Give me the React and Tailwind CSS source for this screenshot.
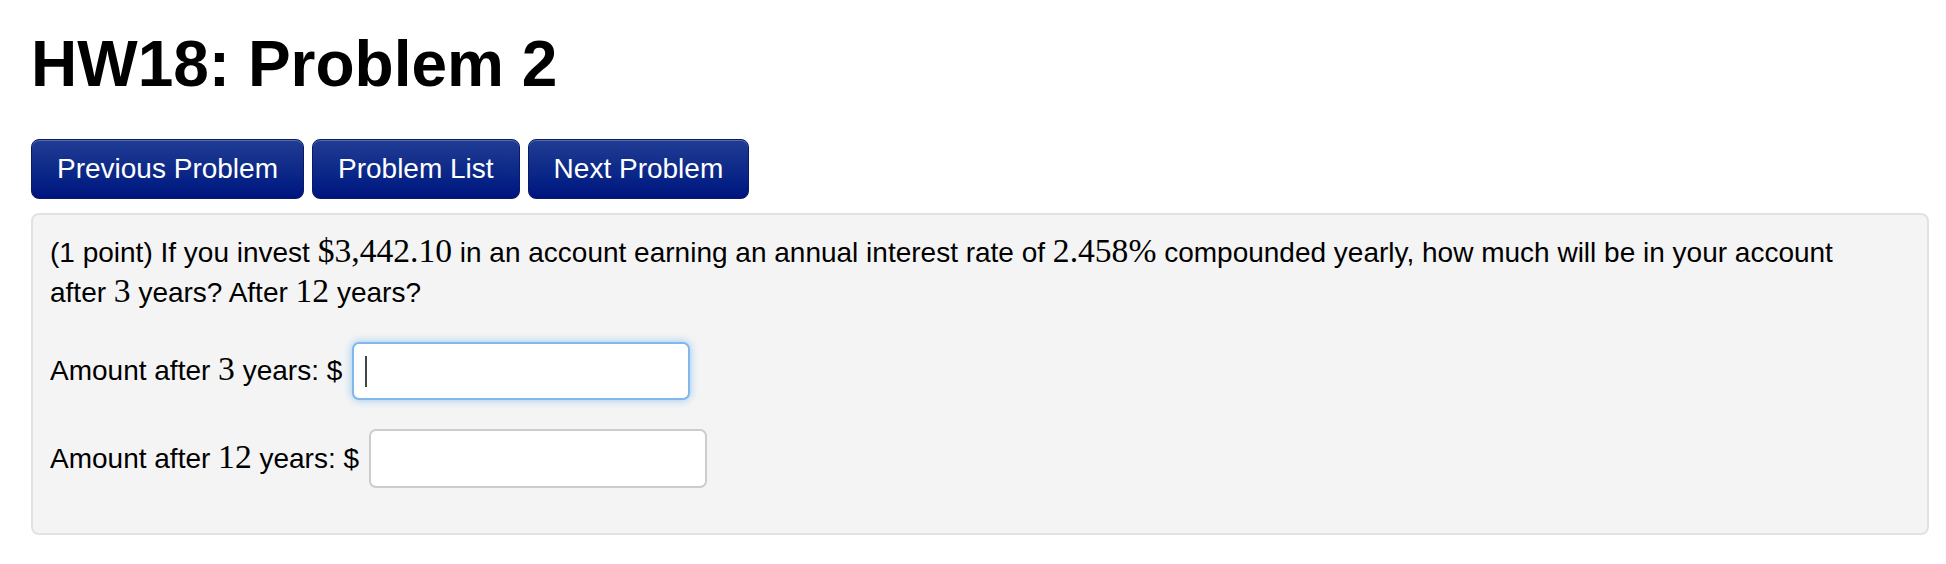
import React from 'react';

const sans = "font-['Liberation_Sans','Helvetica_Neue',Arial,sans-serif]";
const serif = "font-['Liberation_Serif','Times_New_Roman',serif]";

// math bits are rendered a bit larger, in a serif face
const M = ({ children }) => (
  <span className={`${serif} text-[33.6px] leading-none`}>{children}</span>
);

const NavButton = ({ label }) => (
  <button
    type="button"
    className="rounded-[8px] border border-[#0b1a66] bg-gradient-to-b from-[#213c93] to-[#00137f] px-[25px] py-[9px] text-[28px] leading-[40px] text-white shadow-[inset_0_1px_0_rgba(255,255,255,0.25)]"
  >
    {label}
  </button>
);

const AnswerRow = ({ years, focused }) => (
  <div className="flex items-center">
    <span className="whitespace-pre leading-[40px]">
      Amount after <M>{years}</M> years: ${' '}
    </span>
    <div className="relative ml-[2px]">
      <input
        type="text"
        className={
          focused
            ? 'h-[58px] w-[338px] rounded-[7px] border-2 border-[#82b6ec] bg-white px-3 outline-none shadow-[0_0_8px_rgba(82,168,236,0.6)]'
            : 'h-[59px] w-[338px] rounded-[7px] border-2 border-[#cccccc] bg-white px-3 outline-none'
        }
      />
      {focused && (
        <span className="absolute left-[13px] top-[14px] h-[31px] w-[2px] bg-[#444]" />
      )}
    </div>
  </div>
);

export default function App() {
  return (
    <div className={`${sans} min-h-[564px] bg-white pl-[31px] pr-[17px] text-black`}>
      {/* title */}
      <h1 className="pt-[28px] text-[64px] font-bold leading-[72px]">HW18: Problem 2</h1>

      {/* nav buttons */}
      <div className="mt-[39px] flex gap-[8px]">
        <NavButton label="Previous Problem" />
        <NavButton label="Problem List" />
        <NavButton label="Next Problem" />
      </div>

      {/* problem panel */}
      <div className="mt-[14px] h-[322px] rounded-[8px] border-2 border-[#e2e2e2] bg-[#f4f4f4] pl-[17px] pt-[18px] text-[28px]">
        <p className="leading-[40px]">
          <span className="block whitespace-nowrap">
            (1 point) If you invest <M>$3,442.10</M> in an account earning an annual interest rate of{' '}
            <M>2.458%</M> compounded yearly, how much will be in your account
          </span>
          <span className="block whitespace-nowrap">
            after <M>3</M> years? After <M>12</M> years?
          </span>
        </p>

        <div className="mt-[29px] flex flex-col gap-[29px]">
          <AnswerRow years="3" focused />
          <AnswerRow years="12" />
        </div>
      </div>
    </div>
  );
}
